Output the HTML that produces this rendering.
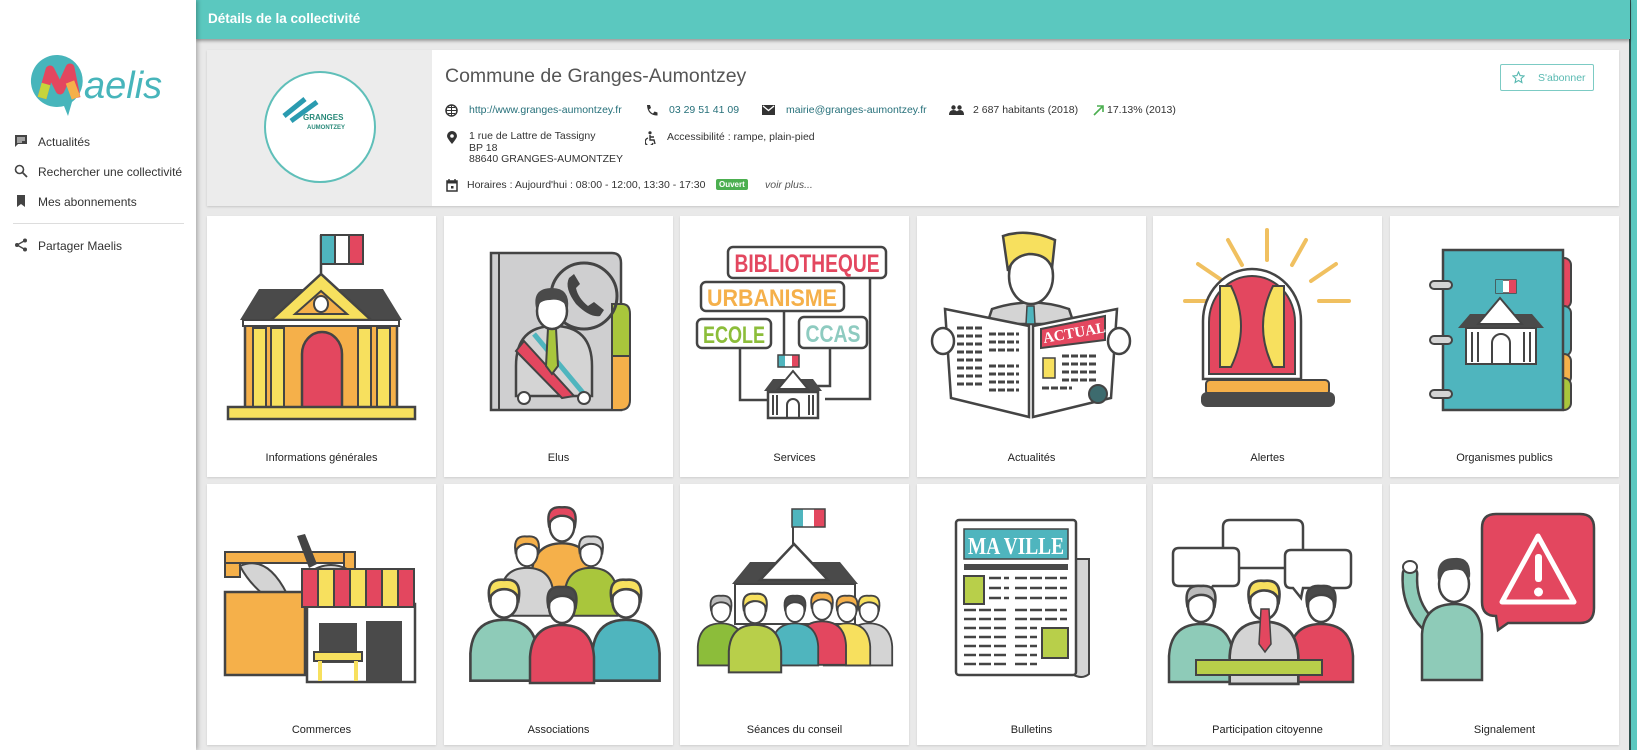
<!DOCTYPE html>
<html><head><meta charset="utf-8">
<style>
*{box-sizing:border-box;margin:0;padding:0}
body{width:1637px;height:750px;overflow:hidden;background:#e9e9e9;font-family:"Liberation Sans",sans-serif;position:relative;color:#333}
#side{position:absolute;left:0;top:0;width:196px;height:750px;background:#fff;box-shadow:2px 0 4px rgba(0,0,0,.25);z-index:2}
.mi{position:absolute;left:38px;font-size:12px;color:#333}
.ic{position:absolute;left:14px}
#hdr{position:absolute;left:196px;top:0;width:1434px;height:39px;background:#5bc8bf;box-shadow:0 2px 3px rgba(0,0,0,.35);z-index:1}
#hdr span{position:absolute;left:12px;top:11px;color:#fff;font-weight:bold;font-size:13.5px}
#redge{position:absolute;left:1629px;top:0;width:8px;height:750px;background:#5bc8bf;border-left:2px solid #2f4f4c}
#card{position:absolute;left:207px;top:50px;width:1412px;height:156px;background:#fff;box-shadow:0 1px 2px rgba(0,0,0,.15)}
#logo{position:absolute;left:0;top:0;width:225px;height:156px;background:#ececec}
.t{position:absolute;font-size:10.5px;color:#333;white-space:nowrap}
.lk{color:#26707a}
.tile{position:absolute;width:229px;height:261px;background:#fff;box-shadow:0 1px 2px rgba(0,0,0,.12)}
.tile .lb{position:absolute;left:0;right:0;top:236px;text-align:center;font-size:11px;color:#222}
.tile svg{position:absolute;left:0;top:0}
</style></head><body>
<svg width="0" height="0" style="position:absolute">
<defs>
<symbol id="per" viewBox="-40 -30 80 110" overflow="visible">
<path d="M-32,78 L-32,52 Q-30,20 0,20 Q30,20 32,52 L32,78 Z" style="fill:var(--b)" stroke="#444" stroke-width="2.5"/>
<ellipse cx="0" cy="2" rx="13" ry="16" fill="#fff" stroke="#444" stroke-width="2.5"/>
<path d="M-14,0 Q-17,-20 0,-18 Q17,-20 14,0 Q10,-10 -2,-9 Q-10,-8 -14,0Z" style="fill:var(--h)" stroke="#444" stroke-width="2.5"/>
</symbol>
</defs></svg>

<div id="side">
<svg style="position:absolute;left:28px;top:52px" width="145" height="68">
<path d="M30,3 A26,26 0 1 0 36,54 L40,64 L44,50 A26,26 0 0 0 30,3Z" fill="#47b5bb"/>
<path d="M14,46 L22,18 L32,38 L42,16 L48,46" fill="none" stroke="#e3475f" stroke-width="9" stroke-linejoin="round"/>
<path d="M14,46 L18,32" stroke="#c6d43b" stroke-width="9"/>
<path d="M42,30 L48,46" stroke="#f5b04a" stroke-width="9"/>
<text x="56" y="46" font-family="Liberation Sans,sans-serif" font-size="38" fill="#47b5bb" font-style="italic">aelis</text>
</svg>
<svg class="ic" style="top:134px" width="14" height="14"><path d="M1,1h12v9H4l-3,3z" fill="#444"/><path d="M3,4h8M3,6h8M3,8h5" stroke="#fff" stroke-width="1"/></svg>
<div class="mi" style="top:135px">Actualités</div>
<svg class="ic" style="top:164px" width="14" height="14"><circle cx="5.5" cy="5.5" r="4" fill="none" stroke="#444" stroke-width="1.6"/><path d="M8.5,8.5L13,13" stroke="#444" stroke-width="1.8"/></svg>
<div class="mi" style="top:165px">Rechercher une collectivité</div>
<svg class="ic" style="top:194px" width="14" height="14"><path d="M3,1h8v12l-4,-3l-4,3z" fill="#444"/></svg>
<div class="mi" style="top:195px">Mes abonnements</div>
<div style="position:absolute;left:13px;top:223px;width:171px;height:1px;background:#ddd"></div>
<svg class="ic" style="top:238px" width="14" height="14"><circle cx="11" cy="2.5" r="2" fill="#444"/><circle cx="3" cy="7" r="2" fill="#444"/><circle cx="11" cy="11.5" r="2" fill="#444"/><path d="M11,2.5L3,7L11,11.5" stroke="#444" stroke-width="1.3" fill="none"/></svg>
<div class="mi" style="top:239px">Partager Maelis</div>
</div>

<div id="hdr"><span>Détails de la collectivité</span></div>
<div id="redge"></div>

<div id="card">
<div id="logo">
<svg width="225" height="156"><circle cx="113" cy="77" r="55" fill="#fff" stroke="#5fbfb9" stroke-width="2"/>
<path d="M77,66 L98,49 M84,71 L110,52" stroke="#2a9bb0" stroke-width="5"/>
<text x="96" y="70" font-family="Liberation Sans,sans-serif" font-size="8" font-weight="bold" fill="#2a8a7a">GRANGES</text>
<text x="100" y="79" font-family="Liberation Sans,sans-serif" font-size="6" font-weight="bold" fill="#2a8a7a">AUMONTZEY</text>
</svg>
</div>
<div class="t" style="left:238px;top:15px;font-size:19.5px;color:#555">Commune de Granges-Aumontzey</div>
<svg style="position:absolute;left:238px;top:54px" width="13" height="13"><circle cx="6.5" cy="6.5" r="5.5" fill="none" stroke="#333" stroke-width="1.5"/><path d="M1,6.5h11M6.5,1v11M3,3.5h7M3,9.5h7" stroke="#333" stroke-width="1"/></svg>
<div class="t lk" style="left:262px;top:54px">http://www.granges-aumontzey.fr</div>
<svg style="position:absolute;left:438px;top:54px" width="13" height="13"><path d="M2,1l3,0l1,3l-2,1.5q1.5,3 4,4l1.5,-2l3,1l0,3q-10,0 -10.5,-10.5z" fill="#333"/></svg>
<div class="t lk" style="left:462px;top:54px">03 29 51 41 09</div>
<svg style="position:absolute;left:555px;top:55px" width="13" height="11"><rect x="0" y="0" width="13" height="10" fill="#333"/><path d="M1,1l5.5,4.5l5.5,-4.5" stroke="#fff" stroke-width="1.3" fill="none"/></svg>
<div class="t lk" style="left:579px;top:54px">mairie@granges-aumontzey.fr</div>
<svg style="position:absolute;left:742px;top:55px" width="15" height="11"><circle cx="4.5" cy="2.5" r="2.2" fill="#333"/><circle cx="10.5" cy="2.5" r="2.2" fill="#333"/><path d="M0,10q0,-5 4.5,-5q4.5,0 4.5,5zM7,10q0,-5 4,-5q4,0 4,5z" fill="#333"/></svg>
<div class="t" style="left:766px;top:54px">2 687 habitants (2018)</div>
<svg style="position:absolute;left:886px;top:55px" width="11" height="11"><path d="M1,10L10,1M4,1h6v6" stroke="#4caf50" stroke-width="1.6" fill="none"/></svg>
<div class="t" style="left:900px;top:54px">17.13% (2013)</div>
<svg style="position:absolute;left:240px;top:81px" width="10" height="14"><path d="M5,13q-5,-6 -5,-8a5,5 0 0 1 10,0q0,2 -5,8z" fill="#333"/><circle cx="5" cy="5" r="1.8" fill="#fff"/></svg>
<div class="t" style="left:262px;top:81px;line-height:11.5px">1 rue de Lattre de Tassigny<br>BP 18<br>88640 GRANGES-AUMONTZEY</div>
<svg style="position:absolute;left:438px;top:81px" width="12" height="14"><circle cx="5" cy="1.8" r="1.6" fill="#333"/><path d="M5,4v5h4l1,4M5,6h4M3,7a4,4 0 1 0 5,5" stroke="#333" stroke-width="1.4" fill="none"/></svg>
<div class="t" style="left:460px;top:81px">Accessibilité : rampe, plain-pied</div>
<svg style="position:absolute;left:239px;top:129px" width="12" height="13"><rect x="1" y="2" width="10" height="10" fill="none" stroke="#333" stroke-width="1.5"/><path d="M1,3h10" stroke="#333" stroke-width="3"/><path d="M3,0v3M9,0v3" stroke="#333" stroke-width="1.4"/><rect x="5" y="7" width="2.5" height="2.5" fill="#333"/></svg>
<div class="t" style="left:260px;top:129px">Horaires : Aujourd'hui : 08:00 - 12:00, 13:30 - 17:30</div>
<div class="t" style="left:509px;top:129px;background:#4caf50;color:#fff;font-size:8px;padding:1px 3px;border-radius:2px;font-weight:bold">Ouvert</div>
<div class="t" style="left:558px;top:129px;font-style:italic;color:#555">voir plus...</div>
<div style="position:absolute;left:1293px;top:14px;width:94px;height:27px;border:1px solid #7ccbc4;border-radius:2px;color:#58b9b1;font-size:10.5px">
<svg style="position:absolute;left:11px;top:6px" width="13" height="13"><path d="M6.5,1l1.6,3.6l3.9,.4l-2.9,2.6l.8,3.9l-3.4,-2l-3.4,2l.8,-3.9l-2.9,-2.6l3.9,-.4z" fill="none" stroke="#58b9b1" stroke-width="1.1"/></svg>
<span style="position:absolute;left:37px;top:7px">S'abonner</span></div>
</div>

<!-- ROW 1 -->
<div class="tile" style="left:207px;top:216px">
<svg width="229" height="215">
<line x1="114" y1="19" x2="114" y2="62" stroke="#444" stroke-width="2.5"/>
<rect x="114" y="19" width="14" height="29" fill="#4fb5be" stroke="#444" stroke-width="2"/><rect x="128" y="19" width="14" height="29" fill="#fff" stroke="#444" stroke-width="2"/><rect x="142" y="19" width="14" height="29" fill="#e3475f" stroke="#444" stroke-width="2"/>
<path d="M33,104 L52,73 L176,73 L195,104Z" fill="#4a4a4a"/>
<path d="M114,58 L64,104 L164,104Z" fill="#f7e05e" stroke="#444" stroke-width="2.5"/>
<path d="M114,75 L88,98 L140,98Z" fill="#f5b04a" stroke="#444" stroke-width="2"/>
<ellipse cx="114" cy="88" rx="7" ry="8" fill="#fff" stroke="#444" stroke-width="2"/>
<rect x="38" y="108" width="152" height="84" fill="#f5b04a" stroke="#444" stroke-width="2.5"/>
<rect x="36" y="104" width="156" height="6" fill="#fff" stroke="#444" stroke-width="2"/>
<g fill="#f7e05e" stroke="#444" stroke-width="2"><rect x="46" y="112" width="13" height="79"/><rect x="64" y="112" width="13" height="79"/><rect x="151" y="112" width="13" height="79"/><rect x="170" y="112" width="13" height="79"/></g>
<path d="M95,192 L95,138 A20,22 0 0 1 135,138 L135,192Z" fill="#e3475f" stroke="#444" stroke-width="2.5"/>
<rect x="21" y="191" width="187" height="12" fill="#f7e05e" stroke="#444" stroke-width="2.5"/>
</svg><div class="lb">Informations générales</div></div>

<div class="tile" style="left:444px;top:216px">
<svg width="229" height="215">
<path d="M47,37 L168,37 Q177,37 177,47 L177,194 L47,194Z" fill="#cfcfd0" stroke="#444" stroke-width="2.5"/>
<line x1="55" y1="37" x2="55" y2="194" stroke="#444" stroke-width="2"/>
<path d="M168,88 L178,88 Q186,88 186,98 L186,140 L168,140Z" fill="#a9c63c" stroke="#444" stroke-width="2"/>
<path d="M168,140 L186,140 L186,184 Q186,194 176,194 L168,194Z" fill="#f5b04a" stroke="#444" stroke-width="2"/>
<circle cx="140" cy="80" r="33" fill="none" stroke="#444" stroke-width="3"/>
<path d="M125,62 Q120,72 132,88 Q146,102 156,100 L160,94 L150,86 L144,90 Q134,82 132,72 L136,68 L130,58Z" fill="#444"/>
<path d="M72,180 L72,150 Q72,110 110,110 Q148,110 148,150 L148,180Z" fill="#d4d4d4" stroke="#444" stroke-width="2.5"/>
<path d="M80,125 L130,180 L118,182 L72,135Z" fill="#e3475f" stroke="#444" stroke-width="2"/>
<path d="M90,118 L140,178" stroke="#4fb5be" stroke-width="5"/>
<path d="M104,112 L112,112 L114,150 L108,158 L102,150Z" fill="#a9c63c" stroke="#444" stroke-width="2"/>
<ellipse cx="108" cy="95" rx="15" ry="18" fill="#fff" stroke="#444" stroke-width="2.5"/>
<path d="M92,92 Q88,72 108,72 Q126,72 124,92 Q118,82 106,84 Q96,84 92,92Z" fill="#4a4a4a"/>
<circle cx="80" cy="182" r="6" fill="#fff" stroke="#444" stroke-width="2"/><circle cx="140" cy="182" r="6" fill="#fff" stroke="#444" stroke-width="2"/>
</svg><div class="lb">Elus</div></div>

<div class="tile" style="left:680px;top:216px">
<svg width="229" height="215" font-family="Liberation Sans,sans-serif" font-weight="bold">
<g fill="none" stroke="#444" stroke-width="2.5"><path d="M90,184 L60,184 L60,132"/><path d="M190,62 L190,183 L145,183"/><path d="M150,132 L150,170 L132,170"/><path d="M104,95 L104,150"/></g>
<rect x="48" y="31" width="158" height="31" rx="5" fill="#fff" stroke="#444" stroke-width="2.5"/>
<text x="127" y="56" text-anchor="middle" font-size="25" fill="#e3475f" textLength="145" lengthAdjust="spacingAndGlyphs">BIBLIOTHEQUE</text>
<rect x="21" y="66" width="143" height="29" rx="5" fill="#fff" stroke="#444" stroke-width="2.5"/>
<text x="92" y="90" text-anchor="middle" font-size="24" fill="#f5b04a" textLength="130" lengthAdjust="spacingAndGlyphs">URBANISME</text>
<rect x="17" y="103" width="74" height="29" rx="5" fill="#fff" stroke="#444" stroke-width="2.5"/>
<text x="54" y="127" text-anchor="middle" font-size="24" fill="#8cbd3a" textLength="62" lengthAdjust="spacingAndGlyphs">ECOLE</text>
<rect x="119" y="101" width="68" height="31" rx="5" fill="#fff" stroke="#444" stroke-width="2.5"/>
<text x="153" y="126" text-anchor="middle" font-size="24" fill="#8ecbc0" textLength="55" lengthAdjust="spacingAndGlyphs">CCAS</text>
<rect x="98" y="139" width="7" height="12" fill="#4fb5be"/><rect x="105" y="139" width="7" height="12" fill="#fff"/><rect x="112" y="139" width="7" height="12" fill="#e3475f"/><rect x="98" y="139" width="21" height="12" fill="none" stroke="#444" stroke-width="1.5"/>
<path d="M84,175 L93,163 L133,163 L142,175Z" fill="#4a4a4a"/>
<path d="M113,155 L98,173 L128,173Z" fill="#fff" stroke="#444" stroke-width="2"/>
<rect x="88" y="176" width="50" height="26" fill="#fff" stroke="#444" stroke-width="2.5"/>
<g stroke="#444" stroke-width="2"><path d="M93,179v20M97,179v20M129,179v20M133,179v20"/></g>
<path d="M107,201v-12a6,6 0 0 1 12,0v12" fill="none" stroke="#444" stroke-width="2"/>
</svg><div class="lb">Services</div></div>

<div class="tile" style="left:917px;top:216px">
<svg width="229" height="215">
<path d="M70,108 L75,93 Q114,80 152,93 L157,108Z" fill="#d4d4d4" stroke="#444" stroke-width="2.5"/>
<path d="M110,90 L117,90 L118,108 L109,108Z" fill="#4fb5be" stroke="#444" stroke-width="1.5"/>
<ellipse cx="114" cy="60" rx="22" ry="28" fill="#fff" stroke="#444" stroke-width="2.5"/>
<path d="M91,55 L86,20 Q110,12 138,24 L135,52 Q130,38 112,38 Q96,40 91,55Z" fill="#f7e05e" stroke="#444" stroke-width="2.5"/>
<path d="M28,93 L112,110 L112,201 L34,182Z" fill="#fff" stroke="#444" stroke-width="2.5"/>
<path d="M200,93 L116,110 L116,201 L194,182Z" fill="#fff" stroke="#444" stroke-width="2.5"/>
<g stroke="#444" stroke-width="3" stroke-dasharray="7 2"><path d="M40,112h25M40,120h25M40,128h25M40,136h25M40,144h25M40,152h25M40,160h25M40,168h25M72,118h30M72,126h30M72,134h30M72,150h30M72,158h30M72,166h30M72,174h30M145,140h35M145,148h35M145,156h35M145,164h35M125,172h30"/></g>
<path d="M124,113 L188,100 L188,124 L124,132Z" fill="#e3475f" stroke="#444" stroke-width="2"/>
<text x="127" y="127" font-family="Liberation Serif,serif" font-weight="bold" font-size="15" fill="#fff" transform="rotate(-10 127 127)">ACTUAL</text>
<rect x="126" y="142" width="12" height="20" fill="#f7e05e" stroke="#444" stroke-width="1.5"/>
<circle cx="181" cy="178" r="9" fill="#3d6b6e" stroke="#444" stroke-width="2"/>
<ellipse cx="26" cy="125" rx="11" ry="13" fill="#fff" stroke="#444" stroke-width="2.5"/>
<ellipse cx="202" cy="125" rx="11" ry="13" fill="#fff" stroke="#444" stroke-width="2.5"/>
</svg><div class="lb">Actualités</div></div>

<div class="tile" style="left:1153px;top:216px">
<svg width="229" height="215">
<g stroke="#f0c060" stroke-width="4" stroke-linecap="round"><path d="M114,14v30M75,24l14,25M153,24l-14,25M45,48l25,17M183,48l-25,17M32,85h30M166,85h30"/></g>
<path d="M50,163 L50,105 A49,52 0 0 1 148,105 L148,163Z" fill="#fff" stroke="#444" stroke-width="2.5"/>
<path d="M56,158 L56,106 A43,46 0 0 1 142,106 L142,158Z" fill="#e3475f" stroke="#444" stroke-width="2"/>
<path d="M67,70 L78,70 Q98,110 78,151 L67,151Z" fill="#f7e05e" stroke="#444" stroke-width="2"/>
<path d="M131,70 L120,70 Q100,110 120,151 L131,151Z" fill="#f7e05e" stroke="#444" stroke-width="2"/>
<rect x="53" y="164" width="123" height="15" rx="4" fill="#f5b04a" stroke="#444" stroke-width="2"/>
<rect x="48" y="176" width="134" height="15" rx="6" fill="#4a4a4a"/>
</svg><div class="lb">Alertes</div></div>

<div class="tile" style="left:1390px;top:216px">
<svg width="229" height="215">
<rect x="165" y="42" width="16" height="50" rx="7" fill="#e3475f" stroke="#444" stroke-width="2"/>
<rect x="165" y="90" width="16" height="50" rx="7" fill="#4fb5be" stroke="#444" stroke-width="2"/>
<rect x="165" y="138" width="16" height="30" rx="7" fill="#f5b04a" stroke="#444" stroke-width="2"/>
<rect x="165" y="162" width="16" height="32" rx="7" fill="#a9c63c" stroke="#444" stroke-width="2"/>
<rect x="53" y="34" width="120" height="160" fill="#4fb5be" stroke="#444" stroke-width="2.5"/>
<g fill="#d4d4d4" stroke="#444" stroke-width="2"><rect x="40" y="65" width="22" height="8" rx="4"/><rect x="40" y="120" width="22" height="8" rx="4"/><rect x="40" y="174" width="22" height="8" rx="4"/></g>
<rect x="106" y="64" width="20" height="13" fill="#fff" stroke="#444" stroke-width="1.5"/><rect x="106" y="64" width="7" height="13" fill="#4fb5be"/><rect x="119" y="64" width="7" height="13" fill="#e3475f"/>
<path d="M68,112 L80,98 L142,98 L154,112Z" fill="#4a4a4a"/>
<path d="M110,82 L88,108 L132,108Z" fill="#fff" stroke="#444" stroke-width="2"/>
<rect x="76" y="112" width="70" height="36" fill="#fff" stroke="#444" stroke-width="2"/>
<g stroke="#444" stroke-width="2"><path d="M82,116v30M88,116v30M134,116v30M140,116v30"/></g>
<path d="M102,147v-20a9,9 0 0 1 18,0v20" fill="none" stroke="#444" stroke-width="2"/>
</svg><div class="lb">Organismes publics</div></div>

<!-- ROW 2 -->
<div class="tile" style="left:207px;top:484px">
<svg width="229" height="215">
<rect x="18" y="68" width="15" height="25" fill="#f5b04a" stroke="#444" stroke-width="2"/>
<rect x="18" y="68" width="130" height="11" fill="#f5b04a" stroke="#444" stroke-width="2"/>
<rect x="137" y="68" width="11" height="25" fill="#f5b04a" stroke="#444" stroke-width="2"/>
<path d="M33,82 Q60,70 80,110 L70,120 Q45,105 33,82Z" fill="#d4d4d4" stroke="#444" stroke-width="2"/>
<path d="M90,52 L98,50 L110,80 L102,84Z" fill="#444"/>
<path d="M100,90 Q120,75 140,85 L110,110Z" fill="#d4d4d4" stroke="#444" stroke-width="2"/>
<rect x="18" y="108" width="80" height="83" fill="#f5b04a" stroke="#444" stroke-width="2.5"/>
<rect x="100" y="120" width="108" height="78" fill="#fff" stroke="#444" stroke-width="2.5"/>
<g stroke="#444" stroke-width="2"><rect x="95" y="85" width="16" height="38" fill="#e3475f"/><rect x="111" y="85" width="16" height="38" fill="#f7e05e"/><rect x="127" y="85" width="16" height="38" fill="#e3475f"/><rect x="143" y="85" width="16" height="38" fill="#f7e05e"/><rect x="159" y="85" width="16" height="38" fill="#e3475f"/><rect x="175" y="85" width="16" height="38" fill="#f7e05e"/><rect x="191" y="85" width="16" height="38" fill="#e3475f"/></g>
<rect x="112" y="139" width="38" height="40" fill="#4a4a4a"/>
<rect x="159" y="137" width="36" height="60" fill="#4a4a4a"/>
<rect x="107" y="168" width="48" height="9" fill="#f7e05e" stroke="#444" stroke-width="2"/>
<path d="M113,177v20M149,177v20" stroke="#f7e05e" stroke-width="4"/>
</svg><div class="lb" style="top:240px">Commerces</div></div>

<div class="tile" style="left:444px;top:484px">
<svg width="229" height="220">
<use href="#per" x="80" y="12" width="76" height="104" style="--b:#f5b04a;--h:#e3475f"/>
<use href="#per" x="50" y="42" width="66" height="92" style="--b:#d4d4d4;--h:#f5b04a"/>
<use href="#per" x="114" y="42" width="66" height="92" style="--b:#a9c63c;--h:#d4d4d4"/>
<use href="#per" x="18" y="82" width="84" height="118" style="--b:#8ecbb8;--h:#f7e05e"/>
<use href="#per" x="140" y="82" width="84" height="118" style="--b:#4fb5be;--h:#f7e05e"/>
<use href="#per" x="78" y="90" width="80" height="112" style="--b:#e3475f;--h:#4a4a4a"/>
</svg><div class="lb" style="top:240px">Associations</div></div>

<div class="tile" style="left:680px;top:484px">
<svg width="229" height="220">
<line x1="113" y1="25" x2="113" y2="60" stroke="#444" stroke-width="2"/>
<rect x="112" y="25" width="11" height="18" fill="#4fb5be"/><rect x="123" y="25" width="11" height="18" fill="#fff"/><rect x="134" y="25" width="11" height="18" fill="#e3475f"/><rect x="112" y="25" width="33" height="18" fill="none" stroke="#444" stroke-width="1.5"/>
<path d="M52,100 L70,78 L160,78 L178,100Z" fill="#4a4a4a"/>
<path d="M114,60 L80,96 L148,96Z" fill="#fff" stroke="#444" stroke-width="2.5"/>
<rect x="55" y="100" width="120" height="40" fill="#fff" stroke="#444" stroke-width="2"/>
<use href="#per" x="12" y="100" width="58" height="86" style="--b:#8cbd3a;--h:#bbb"/>
<use href="#per" x="160" y="100" width="58" height="86" style="--b:#d4d4d4;--h:#f7e05e"/>
<use href="#per" x="138" y="100" width="58" height="86" style="--b:#f7e05e;--h:#f5b04a"/>
<use href="#per" x="112" y="96" width="60" height="90" style="--b:#e3475f;--h:#f5b04a"/>
<use href="#per" x="86" y="100" width="58" height="86" style="--b:#4fb5be;--h:#4a4a4a"/>
<use href="#per" x="42" y="100" width="66" height="90" style="--b:#b8cf4a;--h:#f7e05e"/>
</svg><div class="lb" style="top:240px">Séances du conseil</div></div>

<div class="tile" style="left:917px;top:484px">
<svg width="229" height="215">
<path d="M155,75 L172,75 L172,190 Q165,196 155,190Z" fill="#d4d4d4" stroke="#444" stroke-width="2"/>
<rect x="39" y="36" width="120" height="155" rx="3" fill="#fff" stroke="#444" stroke-width="2.5"/>
<rect x="47" y="45" width="104" height="30" fill="#4fb5be" stroke="#444" stroke-width="1.5"/>
<text x="99" y="70" text-anchor="middle" font-family="Liberation Serif,serif" font-weight="bold" font-size="24" fill="#fff" textLength="96" lengthAdjust="spacingAndGlyphs">MA VILLE</text>
<rect x="47" y="80" width="104" height="6" fill="#4a4a4a"/>
<rect x="47" y="92" width="20" height="28" fill="#b8cf4a" stroke="#444" stroke-width="2"/>
<rect x="125" y="144" width="26" height="30" fill="#b8cf4a" stroke="#444" stroke-width="2"/>
<g stroke="#444" stroke-width="2.5" stroke-dasharray="12 3"><path d="M72,94h20M72,104h20M72,114h20M47,126h45M47,135h45M47,144h45M47,153h45M47,162h45M47,171h45M47,180h45M98,94h52M98,104h52M98,114h52M98,126h52M98,135h52M98,144h22M98,153h22M98,162h22M98,171h22M98,180h22"/></g>
</svg><div class="lb" style="top:240px">Bulletins</div></div>

<div class="tile" style="left:1153px;top:484px">
<svg width="229" height="220">
<g fill="#fff" stroke="#444" stroke-width="2.5">
<path d="M70,43 Q70,36 77,36 L143,36 Q150,36 150,43 L150,77 Q150,84 143,84 L77,84 Q70,84 70,77Z"/>
<path d="M20,70 Q20,64 26,64 L80,64 Q86,64 86,70 L86,96 Q86,102 80,102 L60,102 L52,112 L50,102 L26,102 Q20,102 20,96Z"/>
<path d="M132,72 Q132,66 138,66 L192,66 Q198,66 198,72 L198,98 Q198,104 192,104 L150,104 L148,114 L140,104 L138,104 Q132,104 132,98Z"/>
</g>
<use href="#per" x="8" y="90" width="80" height="110" style="--b:#8ecbb8;--h:#bbb"/>
<use href="#per" x="128" y="90" width="80" height="110" style="--b:#e3475f;--h:#4a4a4a"/>
<use href="#per" x="64" y="84" width="94" height="118" style="--b:#d4d4d4;--h:#f7e05e"/>
<path d="M108,125 L116,125 L118,160 L112,168 L106,160Z" fill="#e3475f" stroke="#444" stroke-width="1.5"/>
<rect x="43" y="176" width="126" height="15" fill="#b8cf4a" stroke="#444" stroke-width="2"/>
</svg><div class="lb" style="top:240px">Participation citoyenne</div></div>

<div class="tile" style="left:1390px;top:484px">
<svg width="229" height="220">
<path d="M106,30 L190,30 Q204,30 204,44 L204,124 Q204,139 190,139 L118,139 L108,146 L106,132 Q92,132 92,118 L92,44 Q92,30 106,30Z" fill="#e3475f" stroke="#444" stroke-width="2.5"/>
<path d="M148,52 L184,118 L112,118Z" fill="none" stroke="#fff" stroke-width="5" stroke-linejoin="round"/>
<rect x="145" y="70" width="7" height="28" rx="3" fill="#fff"/><circle cx="148.5" cy="108" r="4.5" fill="#fff"/>
<path d="M20,90 Q18,120 38,140" stroke="#444" stroke-width="17" fill="none" stroke-linecap="round"/>
<path d="M20,90 Q18,120 38,140" stroke="#8ecbb8" stroke-width="12" fill="none" stroke-linecap="round"/>
<path d="M32,196 L32,150 Q34,120 65,120 Q90,120 92,150 L92,196Z" fill="#8ecbb8" stroke="#444" stroke-width="2.5"/>
<ellipse cx="64" cy="100" rx="15" ry="18" fill="#fff" stroke="#444" stroke-width="2.5"/>
<path d="M48,96 Q45,74 64,74 Q82,72 80,94 Q74,84 62,86 Q52,86 48,96Z" fill="#4a4a4a"/>
<ellipse cx="20" cy="83" rx="7" ry="6" fill="#fff" stroke="#444" stroke-width="2"/>
</svg><div class="lb" style="top:240px">Signalement</div></div>

</body></html>
